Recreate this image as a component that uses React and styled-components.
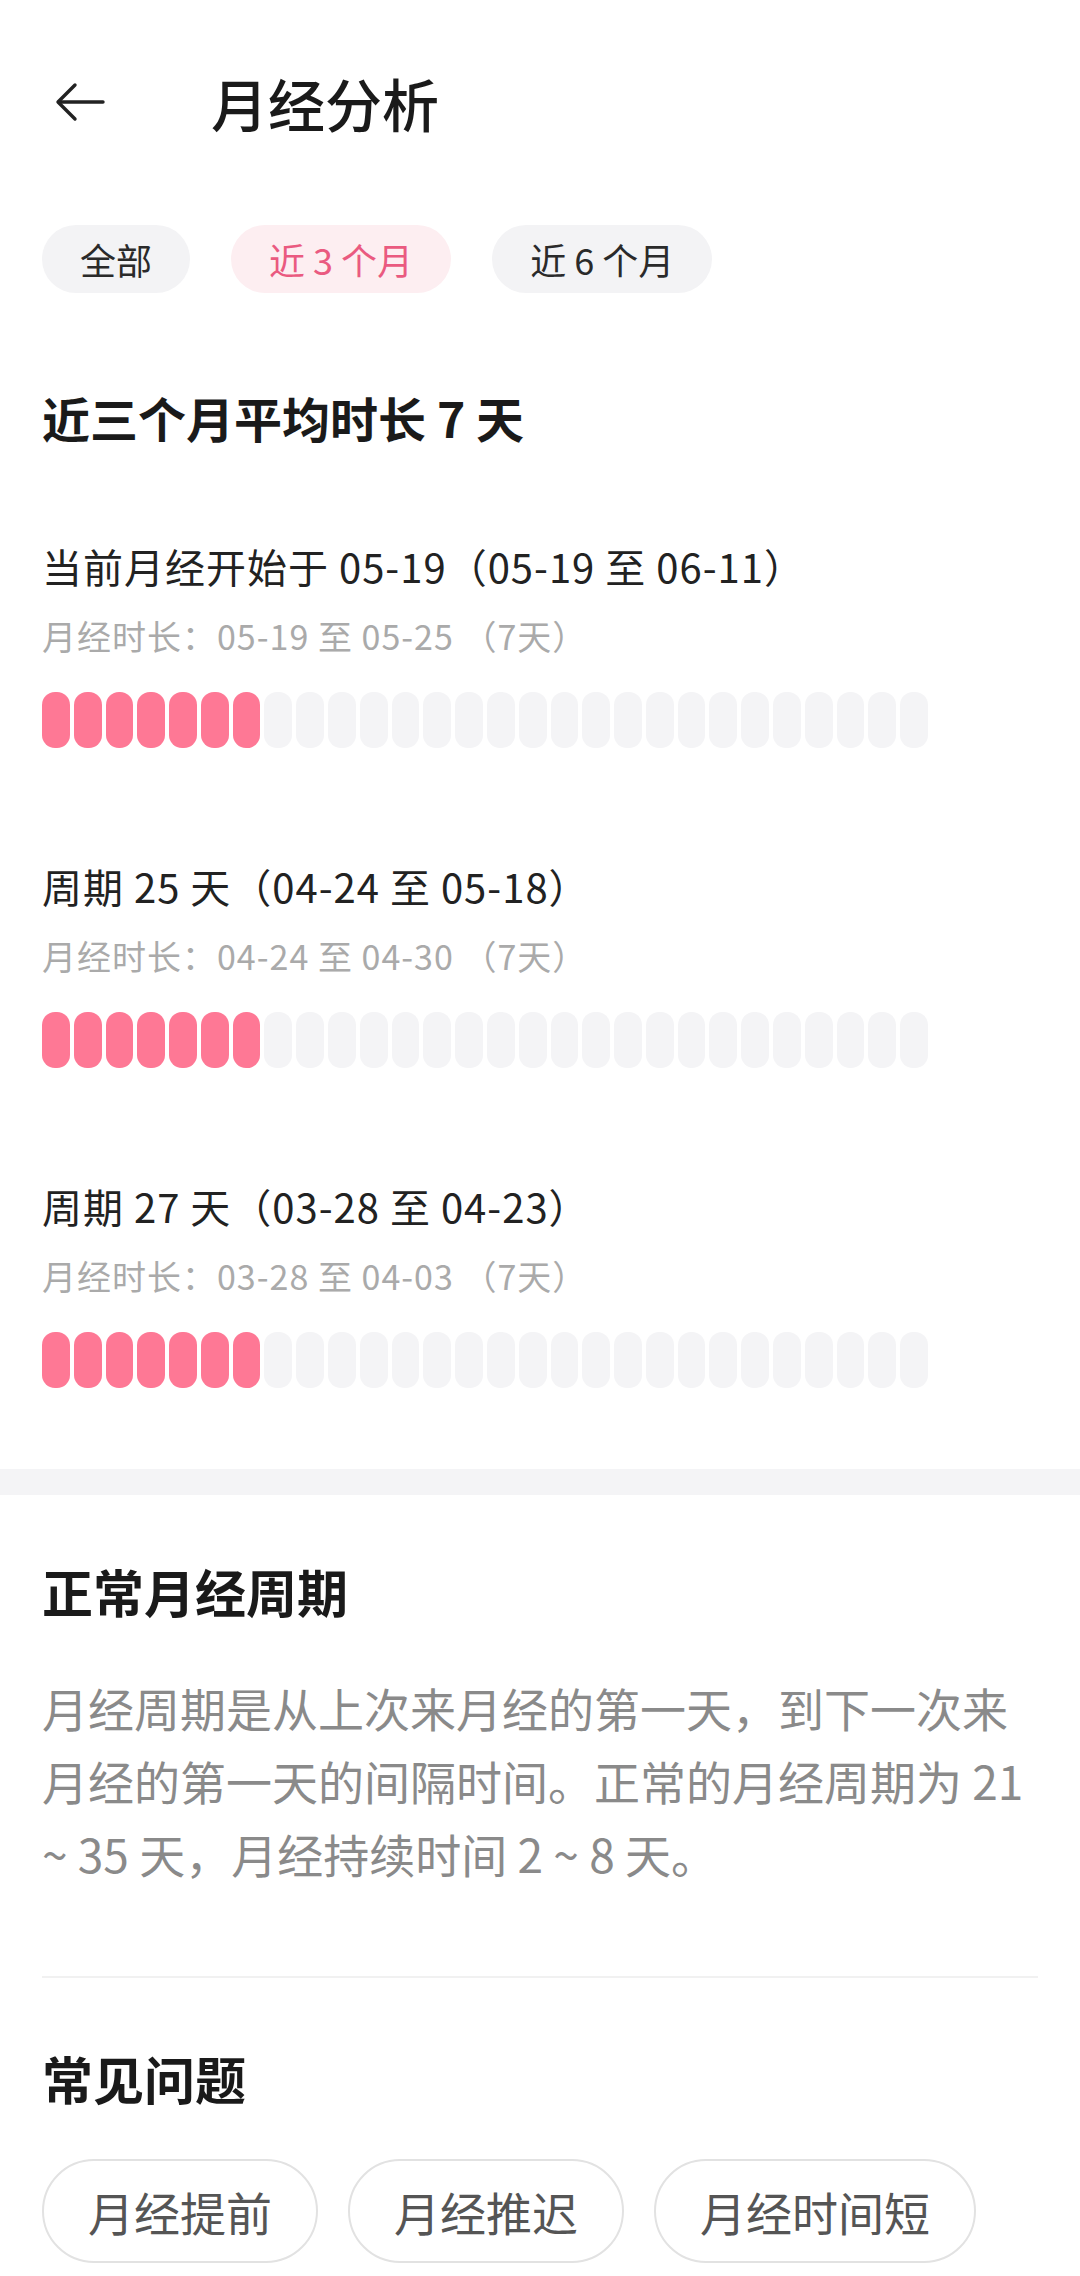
import styled, { createGlobalStyle } from "styled-components";

const GlobalStyle = createGlobalStyle`
  * { box-sizing: border-box; }
  body {
    margin: 0;
    background: #fff;
    font-family: "Noto Sans CJK SC", "Noto Sans", sans-serif;
    color: #1f1f1f;
  }
`;

const Page = styled.div`
  width: 1080px;
  background: #fff;
  overflow: hidden;
`;

const Header = styled.div`
  height: 204px;
  display: flex;
  align-items: center;
  padding-left: 55px;
  gap: 106px;
`;

const BackButton = styled.button`
  border: none;
  background: none;
  padding: 0;
  width: 50px;
  height: 44px;
  display: flex;
  align-items: center;
  color: #222;
`;

const Title = styled.h1`
  margin: 0;
  font-size: 57px;
  font-weight: 500;
  line-height: 84px;
  color: #1a1a1a;
`;

const Inner = styled.div`
  padding: 0 42px;
`;

const FilterRow = styled.div`
  display: flex;
  gap: 41px;
  margin-top: 21px;
`;

const FilterChip = styled.div`
  height: 68px;
  padding: 0 38px;
  border-radius: 34px;
  display: flex;
  align-items: center;
  font-size: 36px;
  white-space: pre;
  background: ${({ $active }) => ($active ? "#fdeef1" : "#f3f3f5")};
  color: ${({ $active }) => ($active ? "#ea5a80" : "#2a2a2a")};
`;

const Heading = styled.h2`
  margin: ${({ $top }) => $top}px 0 0;
  font-size: ${({ $size }) => $size || 51}px;
  font-weight: 700;
  line-height: 60px;
  color: #1a1a1a;
`;

const Cycle = styled.div`
  margin-top: ${({ $top }) => $top}px;
`;

const CycleTitle = styled.div`
  font-size: 40px;
  line-height: 50px;
  letter-spacing: 1px;
  color: #222;
`;

const CycleSub = styled.div`
  margin-top: 25px;
  font-size: 34px;
  line-height: 40px;
  letter-spacing: 1px;
  color: #aaa;
`;

const Bar = styled.div`
  margin-top: 36px;
  width: 886px;
  display: flex;
  gap: 4px;
`;

const Seg = styled.div`
  flex: 1;
  height: 56px;
  border-radius: 13px;
  background: ${({ $on }) => ($on ? "#fe7895" : "#f4f4f6")};
`;

const Band = styled.div`
  height: 26px;
  background: #f4f4f6;
  margin-top: 81px;
`;

const Paragraph = styled.p`
  margin: 50px 0 0;
  font-size: 46px;
  line-height: 73px;
  color: #8a8a8a;
`;

const Divider = styled.div`
  height: 2px;
  background: #f1f1f1;
  margin-top: 86px;
`;

const QuestionRow = styled.div`
  display: flex;
  gap: 30px;
  margin-top: 51px;
`;

const QuestionChip = styled.div`
  height: 104px;
  padding: 0 44px;
  border: 2px solid #e2e2e2;
  border-radius: 52px;
  display: flex;
  align-items: center;
  font-size: 46px;
  color: #555;
`;

const cycles = [
  { title: "当前月经开始于 05-19（05-19 至 06-11）", sub: "月经时长：05-19 至 05-25 （7天）", days: 7, top: 94 },
  { title: "周期 25 天（04-24 至 05-18）", sub: "月经时长：04-24 至 04-30 （7天）", days: 7, top: 113 },
  { title: "周期 27 天（03-28 至 04-23）", sub: "月经时长：03-28 至 04-03 （7天）", days: 7, top: 113 },
];

const filters = ["全部", "近 3 个月", "近 6 个月"];
const questions = ["月经提前", "月经推迟", "月经时间短"];

const App = () => {
  return (
    <Page>
      <GlobalStyle />
      <Header>
        <BackButton>
          <svg width="50" height="44" viewBox="0 0 50 44" fill="none" stroke="currentColor" strokeWidth="3.4" strokeLinecap="round" strokeLinejoin="round">
            <path d="M48 22H4" />
            <path d="M20 5L3 22l17 17" />
          </svg>
        </BackButton>
        <Title>月经分析</Title>
      </Header>

      <Inner>
        <FilterRow>
          {filters.map((f, i) => (
            <FilterChip key={f} $active={i === 1}>{f}</FilterChip>
          ))}
        </FilterRow>

        <Heading $top={94} $size={48}>近三个月平均时长 7 天</Heading>

        {cycles.map(c => (
          <Cycle key={c.title} $top={c.top}>
            <CycleTitle>{c.title}</CycleTitle>
            <CycleSub>{c.sub}</CycleSub>
            <Bar>
              {Array.from({ length: 28 }).map((_, i) => (
                <Seg key={i} $on={i < c.days} />
              ))}
            </Bar>
          </Cycle>
        ))}
      </Inner>

      <Band />

      <Inner>
        <Heading $top={66}>正常月经周期</Heading>
        <Paragraph>
          月经周期是从上次来月经的第一天，到下一次来
          <br />
          月经的第一天的间隔时间。正常的月经周期为 21
          <br />
          ~ 35 天，月经持续时间 2 ~ 8 天。
        </Paragraph>
        <Divider />
        <Heading $top={70}>常见问题</Heading>
        <QuestionRow>
          {questions.map(q => (
            <QuestionChip key={q}>{q}</QuestionChip>
          ))}
        </QuestionRow>
      </Inner>
    </Page>
  );
};

export default App;
